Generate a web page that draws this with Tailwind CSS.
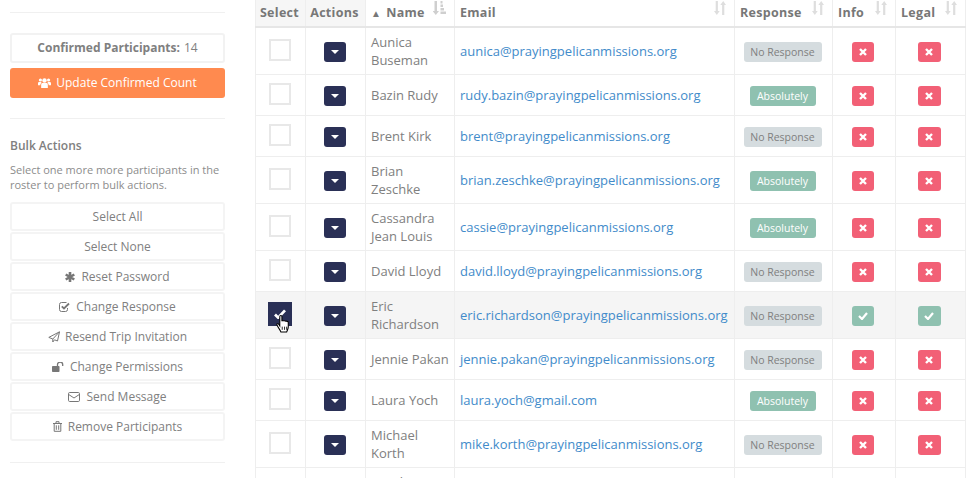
<!DOCTYPE html>
<html lang="en">
<head>
  <meta charset="UTF-8">
  <title>Roster</title>
  <script src="https://cdn.jsdelivr.net/npm/@tailwindcss/browser@4"></script>
</head>
<body class="bg-white h-[478px] w-[976px] overflow-hidden font-['Open_Sans',sans-serif] text-[#808080] text-[13px]">
<div class="flex items-start">

  <!-- Sidebar -->
  <div class="w-[215px] ml-[10px] mr-[30px] shrink-0 pt-[12px]">
    <div class="border-t border-[#f0f0f0]"></div>
    <div class="mt-[20px] h-[30px] border-2 border-[#f2f2f2] rounded-[3px] flex items-center justify-center text-[12px] gap-1"><b class="font-bold">Confirmed Participants:</b> 14</div>
    <button class="mt-[5px] w-full h-[30px] bg-[#ff8a4f] rounded-[3px] text-white text-[12px] flex items-center justify-center gap-[5px]">
      <svg class="w-[13px] h-[12px]" viewBox="0 0 14 12" fill="#fff"><circle cx="7" cy="3.4" r="2.4"/><circle cx="2.6" cy="2.8" r="1.7"/><circle cx="11.4" cy="2.8" r="1.7"/><path d="M3.4 11.5V8c0-1.6 1-2 2-2h3.2c1 0 2 .4 2 2v3.5zM0 8.5V6.3c0-1 .7-1.5 1.500-1.500h1.800c.2.5.5.9.8 1.200C3 6.400 2.500 7.200 2.500 8.500zM14 8.500V6.300c0-1-.7-1.500-1.500-1.500h-1.800c-.2.5-.5.9-.8 1.200 1.100.4 1.600 1.200 1.600 2.500z"/></svg>
      Update Confirmed Count
    </button>
    <div class="mt-[20px] border-t border-[#f0f0f0]"></div>
    <h4 class="mt-[18px] text-[12px] font-semibold leading-[17px]">Bulk Actions</h4>
    <p class="mt-[8px] text-[11px] leading-[15px] text-[#8c8c8c]">Select one more more participants in the roster to perform bulk actions.</p>
    <div class="mt-[10px] flex flex-col gap-px text-[12px]">
      <button class="h-[29px] border-2 border-[#f4f4f4] rounded-[3px] flex items-center justify-center gap-[6px]">Select All</button>
      <button class="h-[29px] border-2 border-[#f4f4f4] rounded-[3px] flex items-center justify-center gap-[6px]">Select None</button>
      <button class="h-[29px] border-2 border-[#f4f4f4] rounded-[3px] flex items-center justify-center gap-[6px]">
        <svg class="w-[10px] h-[10px]" viewBox="0 0 10 10" stroke="#777" stroke-width="2.600" fill="none"><path d="M5 0v10M.7 2.500l8.600 5M.7 7.500l8.600-5"/></svg>
        Reset Password
      </button>
      <button class="h-[29px] border-2 border-[#f4f4f4] rounded-[3px] flex items-center justify-center gap-[6px]">
        <svg class="w-[11px] h-[10px]" viewBox="0 0 11 10" fill="none" stroke="#777"><path d="M8.500 6v1.500a2 2 0 0 1-2 2h-4a2 2 0 0 1-2-2v-5a2 2 0 0 1 2-2h5"/><path d="M2.800 4.300 5 6.500l5-5" stroke-width="1.800"/></svg>
        Change Response
      </button>
      <button class="h-[29px] border-2 border-[#f4f4f4] rounded-[3px] flex items-center justify-center gap-[5px]">
        <svg class="w-[12px] h-[12px]" viewBox="0 0 12 12" fill="none" stroke="#777"><path d="M11.500.8 9.500 10 6.500 8.800 4.800 11V8L.8 6.400zM4.800 8l6.700-7.200"/></svg>
        Resend Trip Invitation
      </button>
      <button class="h-[29px] border-2 border-[#f4f4f4] rounded-[3px] flex items-center justify-center gap-[6px]">
        <svg class="w-[12px] h-[10px]" viewBox="0 0 12 10" fill="#777"><rect x="0" y="4" width="7.500" height="6" rx=".8"/><path d="M5.500 4V2.600a2.600 2.600 0 0 1 5.200 0V4" fill="none" stroke="#777" stroke-width="1.300"/></svg>
        Change Permissions
      </button>
      <button class="h-[29px] border-2 border-[#f4f4f4] rounded-[3px] flex items-center justify-center gap-[6px]">
        <svg class="w-[12px] h-[10px]" viewBox="0 0 12 10" fill="none" stroke="#777"><rect x=".5" y=".5" width="11" height="9" rx="1.200"/><path d="M.7 2.500 6 6l5.300-3.500"/></svg>
        Send Message
      </button>
      <button class="h-[29px] border-2 border-[#f4f4f4] rounded-[3px] flex items-center justify-center gap-[6px]">
        <svg class="w-[9px] h-[11px]" viewBox="0 0 9 11" fill="none" stroke="#777"><path d="M0 2.500h9M3 2.500V.7h3v1.800M1.200 2.500v7.800h6.600V2.500M3.300 4.300v4.500M5.700 4.300v4.500"/></svg>
        Remove Participants
      </button>
    </div>
    <div class="mt-[21px] border-t border-[#f0f0f0]"></div>
  </div>

  <!-- Roster -->
  <table class="table-fixed w-[710px] shrink-0 border-collapse border-x border-[#eee]">
    <colgroup>
      <col class="w-[50px]"><col class="w-[60px]"><col class="w-[89px]"><col class="w-[280px]"><col class="w-[98px]"><col class="w-[63px]"><col class="w-[70px]">
    </colgroup>
    <thead>
      <tr class="h-[27px] border-b-2 border-[#e6e6e6] text-left text-[12.5px] font-bold tracking-[.3px] text-[#777]">
        <th class="border-l border-[#eee] bg-[#f6f6f6] text-center font-bold pr-[2px]">Select</th>
        <th class="border-l border-[#eee] bg-[#f6f6f6] text-center font-bold pr-[2px]">Actions</th>
        <th class="border-l border-[#eee] font-bold pl-[5px]"><div class="flex items-center"><span class="text-[10px] mr-[5px]">▲</span>Name<svg class="ml-auto mr-[8px] -mt-[10px] w-[13px] h-[14px]" viewBox="0 0 13 14" fill="#cfcfcf"><path d="M1.500 0h2.500v10h2l-3.200 4-3.300-4h2zM7.500 0h2v2.500h-2zM7.500 3.500H10V6H7.500zM7.500 7h3.500v2.500H7.500zM7.500 10.500H13V13H7.500z"/></svg></div></th>
        <th class="border-l border-[#eee] font-bold pl-[5px]"><div class="flex items-center">Email<svg class="ml-auto mr-[8px] -mt-[10px] w-[12px] h-[14px]" viewBox="0 0 12 14" fill="#dedede"><path d="M1.700 0h2.200v10h1.800l-2.900 4L0 10h1.700zM8.100 14h2.200V4H12L9.200 0 6.300 4h1.800z"/></svg></div></th>
        <th class="border-l border-[#eee] font-bold pl-[5px]"><div class="flex items-center">Response<svg class="ml-auto mr-[8px] -mt-[10px] w-[12px] h-[14px]" viewBox="0 0 12 14" fill="#dedede"><path d="M1.700 0h2.200v10h1.800l-2.900 4L0 10h1.700zM8.100 14h2.200V4H12L9.200 0 6.300 4h1.800z"/></svg></div></th>
        <th class="border-l border-[#eee] font-bold pl-[5px]"><div class="flex items-center">Info<svg class="ml-auto mr-[8px] -mt-[10px] w-[12px] h-[14px]" viewBox="0 0 12 14" fill="#dedede"><path d="M1.700 0h2.200v10h1.800l-2.900 4L0 10h1.700zM8.100 14h2.200V4H12L9.200 0 6.300 4h1.800z"/></svg></div></th>
        <th class="border-l border-[#eee] font-bold pl-[5px]"><div class="flex items-center">Legal<svg class="ml-auto mr-[8px] -mt-[10px] w-[12px] h-[14px]" viewBox="0 0 12 14" fill="#dedede"><path d="M1.700 0h2.200v10h1.800l-2.900 4L0 10h1.700zM8.100 14h2.200V4H12L9.200 0 6.300 4h1.800z"/></svg></div></th>
      </tr>
    </thead>
    <tbody class="leading-[18px]">
      <tr class="h-[47px] border-b border-[#eee]">
        <td class="border-l border-[#eee] pr-[2px]"><div class="mx-auto w-[22px] h-[22px] border-2 border-[#e8e8e8] -mt-[1px]"></div></td>
        <td class="border-l border-[#eee] pr-[2px]"><div class="mx-auto w-[22px] h-[20px] mt-[2px] bg-[#2a3056] rounded-[3px] flex items-center justify-center"><span class="border-x-[4px] border-t-[4px] border-x-transparent border-t-white"></span></div></td>
        <td class="border-l border-[#eee] pl-[5px]">Aunica Buseman</td>
        <td class="border-l border-[#eee] pl-[5px]"><a class="text-[#428bca]">aunica@prayingpelicanmissions.org</a></td>
        <td class="border-l border-[#eee] pr-[2px]"><span class="mx-auto mt-[2px] w-[78px] h-[20px] rounded-[3px] bg-[#d5dcdf] text-[10.5px] flex items-center justify-center">No Response</span></td>
        <td class="border-l border-[#eee] pr-[2px]"><div class="mx-auto mt-[2px] w-[22px] h-[20px] rounded-[3px] bg-[#f26076] flex items-center justify-center"><svg class="w-[8px] h-[8px]" viewBox="0 0 8 8" stroke="#fff" stroke-width="2.400"><path d="M1 1l6 6M7 1 1 7"/></svg></div></td>
        <td class="border-l border-[#eee] pr-[3px]"><div class="mx-auto mt-[2px] w-[23px] h-[20px] rounded-[3px] bg-[#f26076] flex items-center justify-center"><svg class="w-[8px] h-[8px]" viewBox="0 0 8 8" stroke="#fff" stroke-width="2.400"><path d="M1 1l6 6M7 1 1 7"/></svg></div></td>
      </tr>
      <tr class="h-[41px] border-b border-[#eee]">
        <td class="border-l border-[#eee] pr-[2px]"><div class="mx-auto w-[22px] h-[22px] border-2 border-[#e8e8e8] -mt-[1px]"></div></td>
        <td class="border-l border-[#eee] pr-[2px]"><div class="mx-auto w-[22px] h-[20px] mt-[2px] bg-[#2a3056] rounded-[3px] flex items-center justify-center"><span class="border-x-[4px] border-t-[4px] border-x-transparent border-t-white"></span></div></td>
        <td class="border-l border-[#eee] pl-[5px]">Bazin Rudy</td>
        <td class="border-l border-[#eee] pl-[5px]"><a class="text-[#428bca]">rudy.bazin@prayingpelicanmissions.org</a></td>
        <td class="border-l border-[#eee] pr-[2px]"><span class="mx-auto mt-[2px] w-[66px] h-[20px] rounded-[3px] bg-[#8fc1b0] text-white text-[10.5px] flex items-center justify-center">Absolutely</span></td>
        <td class="border-l border-[#eee] pr-[2px]"><div class="mx-auto mt-[2px] w-[22px] h-[20px] rounded-[3px] bg-[#f26076] flex items-center justify-center"><svg class="w-[8px] h-[8px]" viewBox="0 0 8 8" stroke="#fff" stroke-width="2.400"><path d="M1 1l6 6M7 1 1 7"/></svg></div></td>
        <td class="border-l border-[#eee] pr-[3px]"><div class="mx-auto mt-[2px] w-[23px] h-[20px] rounded-[3px] bg-[#f26076] flex items-center justify-center"><svg class="w-[8px] h-[8px]" viewBox="0 0 8 8" stroke="#fff" stroke-width="2.400"><path d="M1 1l6 6M7 1 1 7"/></svg></div></td>
      </tr>
      <tr class="h-[41px] border-b border-[#eee]">
        <td class="border-l border-[#eee] pr-[2px]"><div class="mx-auto w-[22px] h-[22px] border-2 border-[#e8e8e8] -mt-[1px]"></div></td>
        <td class="border-l border-[#eee] pr-[2px]"><div class="mx-auto w-[22px] h-[20px] mt-[2px] bg-[#2a3056] rounded-[3px] flex items-center justify-center"><span class="border-x-[4px] border-t-[4px] border-x-transparent border-t-white"></span></div></td>
        <td class="border-l border-[#eee] pl-[5px]">Brent Kirk</td>
        <td class="border-l border-[#eee] pl-[5px]"><a class="text-[#428bca]">brent@prayingpelicanmissions.org</a></td>
        <td class="border-l border-[#eee] pr-[2px]"><span class="mx-auto mt-[2px] w-[78px] h-[20px] rounded-[3px] bg-[#d5dcdf] text-[10.5px] flex items-center justify-center">No Response</span></td>
        <td class="border-l border-[#eee] pr-[2px]"><div class="mx-auto mt-[2px] w-[22px] h-[20px] rounded-[3px] bg-[#f26076] flex items-center justify-center"><svg class="w-[8px] h-[8px]" viewBox="0 0 8 8" stroke="#fff" stroke-width="2.400"><path d="M1 1l6 6M7 1 1 7"/></svg></div></td>
        <td class="border-l border-[#eee] pr-[3px]"><div class="mx-auto mt-[2px] w-[23px] h-[20px] rounded-[3px] bg-[#f26076] flex items-center justify-center"><svg class="w-[8px] h-[8px]" viewBox="0 0 8 8" stroke="#fff" stroke-width="2.400"><path d="M1 1l6 6M7 1 1 7"/></svg></div></td>
      </tr>
      <tr class="h-[47px] border-b border-[#eee]">
        <td class="border-l border-[#eee] pr-[2px]"><div class="mx-auto w-[22px] h-[22px] border-2 border-[#e8e8e8] -mt-[1px]"></div></td>
        <td class="border-l border-[#eee] pr-[2px]"><div class="mx-auto w-[22px] h-[20px] mt-[2px] bg-[#2a3056] rounded-[3px] flex items-center justify-center"><span class="border-x-[4px] border-t-[4px] border-x-transparent border-t-white"></span></div></td>
        <td class="border-l border-[#eee] pl-[5px]">Brian Zeschke</td>
        <td class="border-l border-[#eee] pl-[5px]"><a class="text-[#428bca]">brian.zeschke@prayingpelicanmissions.org</a></td>
        <td class="border-l border-[#eee] pr-[2px]"><span class="mx-auto mt-[2px] w-[66px] h-[20px] rounded-[3px] bg-[#8fc1b0] text-white text-[10.5px] flex items-center justify-center">Absolutely</span></td>
        <td class="border-l border-[#eee] pr-[2px]"><div class="mx-auto mt-[2px] w-[22px] h-[20px] rounded-[3px] bg-[#f26076] flex items-center justify-center"><svg class="w-[8px] h-[8px]" viewBox="0 0 8 8" stroke="#fff" stroke-width="2.400"><path d="M1 1l6 6M7 1 1 7"/></svg></div></td>
        <td class="border-l border-[#eee] pr-[3px]"><div class="mx-auto mt-[2px] w-[23px] h-[20px] rounded-[3px] bg-[#f26076] flex items-center justify-center"><svg class="w-[8px] h-[8px]" viewBox="0 0 8 8" stroke="#fff" stroke-width="2.400"><path d="M1 1l6 6M7 1 1 7"/></svg></div></td>
      </tr>
      <tr class="h-[47px] border-b border-[#eee]">
        <td class="border-l border-[#eee] pr-[2px]"><div class="mx-auto w-[22px] h-[22px] border-2 border-[#e8e8e8] -mt-[1px]"></div></td>
        <td class="border-l border-[#eee] pr-[2px]"><div class="mx-auto w-[22px] h-[20px] mt-[2px] bg-[#2a3056] rounded-[3px] flex items-center justify-center"><span class="border-x-[4px] border-t-[4px] border-x-transparent border-t-white"></span></div></td>
        <td class="border-l border-[#eee] pl-[5px]">Cassandra Jean Louis</td>
        <td class="border-l border-[#eee] pl-[5px]"><a class="text-[#428bca]">cassie@prayingpelicanmissions.org</a></td>
        <td class="border-l border-[#eee] pr-[2px]"><span class="mx-auto mt-[2px] w-[66px] h-[20px] rounded-[3px] bg-[#8fc1b0] text-white text-[10.5px] flex items-center justify-center">Absolutely</span></td>
        <td class="border-l border-[#eee] pr-[2px]"><div class="mx-auto mt-[2px] w-[22px] h-[20px] rounded-[3px] bg-[#f26076] flex items-center justify-center"><svg class="w-[8px] h-[8px]" viewBox="0 0 8 8" stroke="#fff" stroke-width="2.400"><path d="M1 1l6 6M7 1 1 7"/></svg></div></td>
        <td class="border-l border-[#eee] pr-[3px]"><div class="mx-auto mt-[2px] w-[23px] h-[20px] rounded-[3px] bg-[#f26076] flex items-center justify-center"><svg class="w-[8px] h-[8px]" viewBox="0 0 8 8" stroke="#fff" stroke-width="2.400"><path d="M1 1l6 6M7 1 1 7"/></svg></div></td>
      </tr>
      <tr class="h-[41px] border-b border-[#eee]">
        <td class="border-l border-[#eee] pr-[2px]"><div class="mx-auto w-[22px] h-[22px] border-2 border-[#e8e8e8] -mt-[1px]"></div></td>
        <td class="border-l border-[#eee] pr-[2px]"><div class="mx-auto w-[22px] h-[20px] mt-[2px] bg-[#2a3056] rounded-[3px] flex items-center justify-center"><span class="border-x-[4px] border-t-[4px] border-x-transparent border-t-white"></span></div></td>
        <td class="border-l border-[#eee] pl-[5px]">David Lloyd</td>
        <td class="border-l border-[#eee] pl-[5px]"><a class="text-[#428bca]">david.lloyd@prayingpelicanmissions.org</a></td>
        <td class="border-l border-[#eee] pr-[2px]"><span class="mx-auto mt-[2px] w-[78px] h-[20px] rounded-[3px] bg-[#d5dcdf] text-[10.5px] flex items-center justify-center">No Response</span></td>
        <td class="border-l border-[#eee] pr-[2px]"><div class="mx-auto mt-[2px] w-[22px] h-[20px] rounded-[3px] bg-[#f26076] flex items-center justify-center"><svg class="w-[8px] h-[8px]" viewBox="0 0 8 8" stroke="#fff" stroke-width="2.400"><path d="M1 1l6 6M7 1 1 7"/></svg></div></td>
        <td class="border-l border-[#eee] pr-[3px]"><div class="mx-auto mt-[2px] w-[23px] h-[20px] rounded-[3px] bg-[#f26076] flex items-center justify-center"><svg class="w-[8px] h-[8px]" viewBox="0 0 8 8" stroke="#fff" stroke-width="2.400"><path d="M1 1l6 6M7 1 1 7"/></svg></div></td>
      </tr>
      <!-- selected row, with the hand cursor over its checkbox -->
      <tr class="h-[47px] border-b border-[#eee] bg-[#f5f5f5]">
        <td class="border-l border-[#eee] pr-[2px]">
          <div class="relative mx-auto w-[24px] h-[24px] -mt-[1px] bg-[#2a3056] flex items-center justify-center">
            <svg class="w-[12px] h-[10px]" viewBox="0 0 13 11" fill="none" stroke="#fff" stroke-width="3"><path d="M1 6l3.500 3.500L12 1.500"/></svg>
            <svg class="absolute left-[8px] top-[13px] w-[15px] h-[18px]" viewBox="0 0 14 17" fill="#fff" stroke="#000" stroke-width="1"><path d="M3.500 1.500c0-1.300 2-1.300 2 0V6c0-.8 2-.8 2 0 0-.7 2-.7 2 .3 0-.6 2-.5 2 .5v4.500c0 2-1 3-1.500 4.700H4.500C3.800 14 2 12 .8 9.500c-.5-1.200 1-1.800 1.700-.7l1 1.500z"/><path d="M5.800 11v3M8 11v3M10 11v3" stroke-width=".8"/></svg>
          </div>
        </td>
        <td class="border-l border-[#eee] pr-[2px]"><div class="mx-auto w-[22px] h-[20px] mt-[2px] bg-[#2a3056] rounded-[3px] flex items-center justify-center"><span class="border-x-[4px] border-t-[4px] border-x-transparent border-t-white"></span></div></td>
        <td class="border-l border-[#eee] pl-[5px]">Eric Richardson</td>
        <td class="border-l border-[#eee] pl-[5px]"><a class="text-[#428bca]">eric.richardson@prayingpelicanmissions.org</a></td>
        <td class="border-l border-[#eee] pr-[2px]"><span class="mx-auto mt-[2px] w-[78px] h-[20px] rounded-[3px] bg-[#d5dcdf] text-[10.5px] flex items-center justify-center">No Response</span></td>
        <td class="border-l border-[#eee] pr-[2px]"><div class="mx-auto mt-[2px] w-[22px] h-[20px] rounded-[3px] bg-[#8fc1b0] flex items-center justify-center"><svg class="w-[10px] h-[8px]" viewBox="0 0 10 8" fill="none" stroke="#fff" stroke-width="2.200"><path d="M1 4l3 3 5-6"/></svg></div></td>
        <td class="border-l border-[#eee] pr-[3px]"><div class="mx-auto mt-[2px] w-[23px] h-[20px] rounded-[3px] bg-[#8fc1b0] flex items-center justify-center"><svg class="w-[10px] h-[8px]" viewBox="0 0 10 8" fill="none" stroke="#fff" stroke-width="2.200"><path d="M1 4l3 3 5-6"/></svg></div></td>
      </tr>
      <tr class="h-[41px] border-b border-[#eee]">
        <td class="border-l border-[#eee] pr-[2px]"><div class="mx-auto w-[22px] h-[22px] border-2 border-[#e8e8e8] -mt-[1px]"></div></td>
        <td class="border-l border-[#eee] pr-[2px]"><div class="mx-auto w-[22px] h-[20px] mt-[2px] bg-[#2a3056] rounded-[3px] flex items-center justify-center"><span class="border-x-[4px] border-t-[4px] border-x-transparent border-t-white"></span></div></td>
        <td class="border-l border-[#eee] pl-[5px]">Jennie Pakan</td>
        <td class="border-l border-[#eee] pl-[5px]"><a class="text-[#428bca]">jennie.pakan@prayingpelicanmissions.org</a></td>
        <td class="border-l border-[#eee] pr-[2px]"><span class="mx-auto mt-[2px] w-[78px] h-[20px] rounded-[3px] bg-[#d5dcdf] text-[10.5px] flex items-center justify-center">No Response</span></td>
        <td class="border-l border-[#eee] pr-[2px]"><div class="mx-auto mt-[2px] w-[22px] h-[20px] rounded-[3px] bg-[#f26076] flex items-center justify-center"><svg class="w-[8px] h-[8px]" viewBox="0 0 8 8" stroke="#fff" stroke-width="2.400"><path d="M1 1l6 6M7 1 1 7"/></svg></div></td>
        <td class="border-l border-[#eee] pr-[3px]"><div class="mx-auto mt-[2px] w-[23px] h-[20px] rounded-[3px] bg-[#f26076] flex items-center justify-center"><svg class="w-[8px] h-[8px]" viewBox="0 0 8 8" stroke="#fff" stroke-width="2.400"><path d="M1 1l6 6M7 1 1 7"/></svg></div></td>
      </tr>
      <tr class="h-[41px] border-b border-[#eee]">
        <td class="border-l border-[#eee] pr-[2px]"><div class="mx-auto w-[22px] h-[22px] border-2 border-[#e8e8e8] -mt-[1px]"></div></td>
        <td class="border-l border-[#eee] pr-[2px]"><div class="mx-auto w-[22px] h-[20px] mt-[2px] bg-[#2a3056] rounded-[3px] flex items-center justify-center"><span class="border-x-[4px] border-t-[4px] border-x-transparent border-t-white"></span></div></td>
        <td class="border-l border-[#eee] pl-[5px]">Laura Yoch</td>
        <td class="border-l border-[#eee] pl-[5px]"><a class="text-[#428bca]">laura.yoch@gmail.com</a></td>
        <td class="border-l border-[#eee] pr-[2px]"><span class="mx-auto mt-[2px] w-[66px] h-[20px] rounded-[3px] bg-[#8fc1b0] text-white text-[10.5px] flex items-center justify-center">Absolutely</span></td>
        <td class="border-l border-[#eee] pr-[2px]"><div class="mx-auto mt-[2px] w-[22px] h-[20px] rounded-[3px] bg-[#f26076] flex items-center justify-center"><svg class="w-[8px] h-[8px]" viewBox="0 0 8 8" stroke="#fff" stroke-width="2.400"><path d="M1 1l6 6M7 1 1 7"/></svg></div></td>
        <td class="border-l border-[#eee] pr-[3px]"><div class="mx-auto mt-[2px] w-[23px] h-[20px] rounded-[3px] bg-[#f26076] flex items-center justify-center"><svg class="w-[8px] h-[8px]" viewBox="0 0 8 8" stroke="#fff" stroke-width="2.400"><path d="M1 1l6 6M7 1 1 7"/></svg></div></td>
      </tr>
      <tr class="h-[47px] border-b border-[#eee]">
        <td class="border-l border-[#eee] pr-[2px]"><div class="mx-auto w-[22px] h-[22px] border-2 border-[#e8e8e8] -mt-[1px]"></div></td>
        <td class="border-l border-[#eee] pr-[2px]"><div class="mx-auto w-[22px] h-[20px] mt-[2px] bg-[#2a3056] rounded-[3px] flex items-center justify-center"><span class="border-x-[4px] border-t-[4px] border-x-transparent border-t-white"></span></div></td>
        <td class="border-l border-[#eee] pl-[5px]">Michael Korth</td>
        <td class="border-l border-[#eee] pl-[5px]"><a class="text-[#428bca]">mike.korth@prayingpelicanmissions.org</a></td>
        <td class="border-l border-[#eee] pr-[2px]"><span class="mx-auto mt-[2px] w-[78px] h-[20px] rounded-[3px] bg-[#d5dcdf] text-[10.5px] flex items-center justify-center">No Response</span></td>
        <td class="border-l border-[#eee] pr-[2px]"><div class="mx-auto mt-[2px] w-[22px] h-[20px] rounded-[3px] bg-[#f26076] flex items-center justify-center"><svg class="w-[8px] h-[8px]" viewBox="0 0 8 8" stroke="#fff" stroke-width="2.400"><path d="M1 1l6 6M7 1 1 7"/></svg></div></td>
        <td class="border-l border-[#eee] pr-[3px]"><div class="mx-auto mt-[2px] w-[23px] h-[20px] rounded-[3px] bg-[#f26076] flex items-center justify-center"><svg class="w-[8px] h-[8px]" viewBox="0 0 8 8" stroke="#fff" stroke-width="2.400"><path d="M1 1l6 6M7 1 1 7"/></svg></div></td>
      </tr>
      <tr class="h-[47px]">
        <td class="border-l border-[#eee]"></td>
        <td class="border-l border-[#eee]"></td>
        <td class="border-l border-[#eee] pl-[5px] align-top pt-[5px]">Natalie</td>
        <td class="border-l border-[#eee]"></td>
        <td class="border-l border-[#eee]"></td>
        <td class="border-l border-[#eee]"></td>
        <td class="border-l border-[#eee]"></td>
      </tr>
    </tbody>
  </table>
</div>
</body>
</html>
